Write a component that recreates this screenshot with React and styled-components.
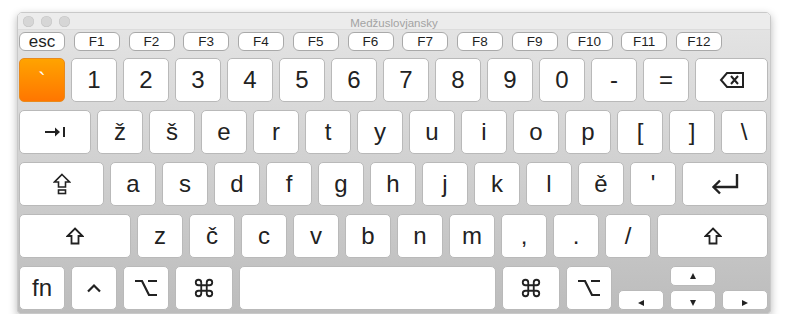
import styled, { createGlobalStyle } from 'styled-components'

const GlobalStyle = createGlobalStyle`
  body {
    margin: 0;
    background: #ffffff;
    font-family: "Liberation Sans", Arial, sans-serif;
  }
`

const Page = styled.div`
  padding: 12px 0 0 17px;
`

const Window = styled.div`
  width: 754px;
  box-sizing: border-box;
  border: 1px solid #c9c9c9;
  border-radius: 5px 5px 3px 3px;
  overflow: hidden;
  box-shadow: 0 3px 9px rgba(0, 0, 0, 0.28);
  display: flex;
  flex-direction: column;
`

const TitleBar = styled.div`
  height: 16px;
  background: #ececec;
  border-bottom: 1px solid #dcdcdc;
  position: relative;
  display: flex;
  align-items: center;
  justify-content: center;
`

const Lights = styled.div`
  position: absolute;
  left: 5px;
  top: 3px;
  display: flex;
  gap: 7px;
`

const Light = styled.span`
  width: 11px;
  height: 11px;
  border-radius: 50%;
  background: #d6d6d6;
  box-shadow: inset 0 0 0 0.5px #c4c4c4;
`

const Title = styled.span`
  font-size: 11.5px;
  color: #a3a3a3;
  margin-top: 3px;
`

const Board = styled.div`
  background: linear-gradient(#e3e3e3, #bcbcbc);
  padding: 2px 2px 3px 1px;
  display: flex;
  flex-direction: column;
  gap: 8px;
`

const FnRow = styled.div`
  display: grid;
  grid-template-columns: repeat(13, 46px);
  column-gap: 8.75px;
  height: 18px;
`

const FnKey = styled.div`
  box-sizing: border-box;
  background: #ffffff;
  border: 1px solid #a9a9a9;
  border-radius: 6px;
  display: flex;
  align-items: center;
  justify-content: center;
  font-size: ${p => (p.$big ? '17px' : '13.5px')};
  line-height: 1;
  color: #1f1f1f;
  padding-top: ${p => (p.$big ? '0' : '1px')};
`

const Row = styled.div`
  display: flex;
  gap: 6px;
  height: 44px;
`

const Key = styled.div`
  box-sizing: border-box;
  width: ${p => (p.$w ? `${p.$w}px` : 'auto')};
  flex: ${p => (p.$grow ? '1' : 'none')};
  height: ${p => (p.$h ? `${p.$h}px` : '100%')};
  background: ${p => (p.$orange ? 'linear-gradient(#ffa300, #ff7600)' : '#ffffff')};
  border: 1px solid ${p => (p.$orange ? '#e98a1c' : '#b9b9b9')};
  border-radius: 5px;
  display: flex;
  align-items: ${p => (p.$low ? 'flex-end' : 'center')};
  justify-content: center;
  padding-bottom: ${p => (p.$low ? '3px' : '0')};
  font-size: 24px;
  line-height: 1;
  color: ${p => (p.$orange ? '#ffffff' : '#222222')};
`

const Tick = styled.span`
  font-size: 22px;
  margin-top: 2px;
`

const ArrowCluster = styled.div`
  display: flex;
  gap: 6px;
  align-items: flex-end;
`

const ArrowColumn = styled.div`
  display: flex;
  flex-direction: column;
  gap: 4px;
`

const Icon = ({ w, h, vb, children, sw = 2 }) => (
  <svg width={w} height={h} viewBox={vb} fill='none' stroke='#222' strokeWidth={sw}>
    {children}
  </svg>
)

const Backspace = () => (
  <Icon w={26} h={18} vb='0 0 26 18'>
    <path d='M8 2 H24 V16 H8 L2 9 Z' strokeLinejoin='miter' />
    <path d='M12 5 L19 13 M19 5 L12 13' />
  </Icon>
)

const Tab = () => (
  <Icon w={22} h={12} vb='0 0 22 12'>
    <path d='M1 6 H14' />
    <path d='M11 1.5 L16 6 L11 10.5 Z' fill='#222' stroke='none' />
    <path d='M20 1 V11' />
  </Icon>
)

const Shift = () => (
  <Icon w={18} h={18} vb='0 0 18 18' sw={1.8}>
    <path d='M9 1.5 L16.5 9 H12.5 V16.5 H5.5 V9 H1.5 Z' strokeLinejoin='miter' />
  </Icon>
)

const CapsLock = () => (
  <Icon w={18} h={22} vb='0 0 18 22' sw={1.6}>
    <path d='M9 1.5 L16.5 9 H12.5 V14 H5.5 V9 H1.5 Z' strokeLinejoin='miter' />
    <rect x='5.5' y='17' width='7' height='3.5' />
  </Icon>
)

const Return = () => (
  <Icon w={32} h={24} vb='0 0 32 24' sw={2.4}>
    <path d='M28 2 V15 H5' />
    <path d='M11 8.5 L4.5 15 L11 21.5' />
  </Icon>
)

const Control = () => (
  <Icon w={16} h={10} vb='0 0 16 10' sw={2.2}>
    <path d='M2 8.5 L8 2.5 L14 8.5' />
  </Icon>
)

const Option = () => (
  <Icon w={24} h={18} vb='0 0 24 18' sw={2.2}>
    <path d='M1 2 H8 L15 16 H23 M14 2 H23' />
  </Icon>
)

const Command = () => (
  <Icon w={22} h={22} vb='0 0 24 24' sw={2}>
    <path d='M15 6v12a3 3 0 1 0 3-3H6a3 3 0 1 0 3 3V6a3 3 0 1 0-3 3h12a3 3 0 1 0-3-3' />
  </Icon>
)

const Tri = ({ dir }) => {
  const pts = {
    up: '3,0 6,6 0,6',
    down: '0,0 6,0 3,6',
    left: '6,0 6,6 0,3',
    right: '0,0 6,3 0,6'
  }
  return (
    <svg width='6' height='6' viewBox='0 0 6 6'>
      <polygon points={pts[dir]} fill='#222' />
    </svg>
  )
}

const fnKeys = ['F1', 'F2', 'F3', 'F4', 'F5', 'F6', 'F7', 'F8', 'F9', 'F10', 'F11', 'F12']
const numberRow = ['1', '2', '3', '4', '5', '6', '7', '8', '9', '0', '-', '=']
const topRow = ['ž', 'š', 'e', 'r', 't', 'y', 'u', 'i', 'o', 'p', '[', ']', '\\']
const homeRow = ['a', 's', 'd', 'f', 'g', 'h', 'j', 'k', 'l', 'ě', "'"]
const bottomRow = ['z', 'č', 'c', 'v', 'b', 'n', 'm', ',', '.', '/']

const App = () => {
  return (
    <Page>
      <GlobalStyle />
      <Window>
        <TitleBar>
          <Lights>
            <Light />
            <Light />
            <Light />
          </Lights>
          <Title>Medžuslovjansky</Title>
        </TitleBar>
        <Board>
          <FnRow>
            <FnKey $big>esc</FnKey>
            {fnKeys.map(k => (
              <FnKey key={k}>{k}</FnKey>
            ))}
          </FnRow>
          <Row>
            <Key $w={46} $orange>
              <Tick>`</Tick>
            </Key>
            {numberRow.map(k => (
              <Key key={k} $w={46}>{k}</Key>
            ))}
            <Key $grow>
              <Backspace />
            </Key>
          </Row>
          <Row>
            <Key $w={72}>
              <Tab />
            </Key>
            {topRow.map(k => (
              <Key key={k} $w={46}>{k}</Key>
            ))}
          </Row>
          <Row>
            <Key $w={85}>
              <CapsLock />
            </Key>
            {homeRow.map(k => (
              <Key key={k} $w={46}>{k}</Key>
            ))}
            <Key $grow>
              <Return />
            </Key>
          </Row>
          <Row>
            <Key $w={112}>
              <Shift />
            </Key>
            {bottomRow.map(k => (
              <Key key={k} $w={46}>{k}</Key>
            ))}
            <Key $grow>
              <Shift />
            </Key>
          </Row>
          <Row>
            <Key $w={46}>fn</Key>
            <Key $w={46}>
              <Control />
            </Key>
            <Key $w={46}>
              <Option />
            </Key>
            <Key $w={58}>
              <Command />
            </Key>
            <Key $grow />
            <Key $w={58}>
              <Command />
            </Key>
            <Key $w={46}>
              <Option />
            </Key>
            <ArrowCluster>
              <Key $w={46} $h={20} $low>
                <Tri dir='left' />
              </Key>
              <ArrowColumn>
                <Key $w={46} $h={20}>
                  <Tri dir='up' />
                </Key>
                <Key $w={46} $h={20} $low>
                  <Tri dir='down' />
                </Key>
              </ArrowColumn>
              <Key $w={46} $h={20} $low>
                <Tri dir='right' />
              </Key>
            </ArrowCluster>
          </Row>
        </Board>
      </Window>
    </Page>
  )
}

export default App
